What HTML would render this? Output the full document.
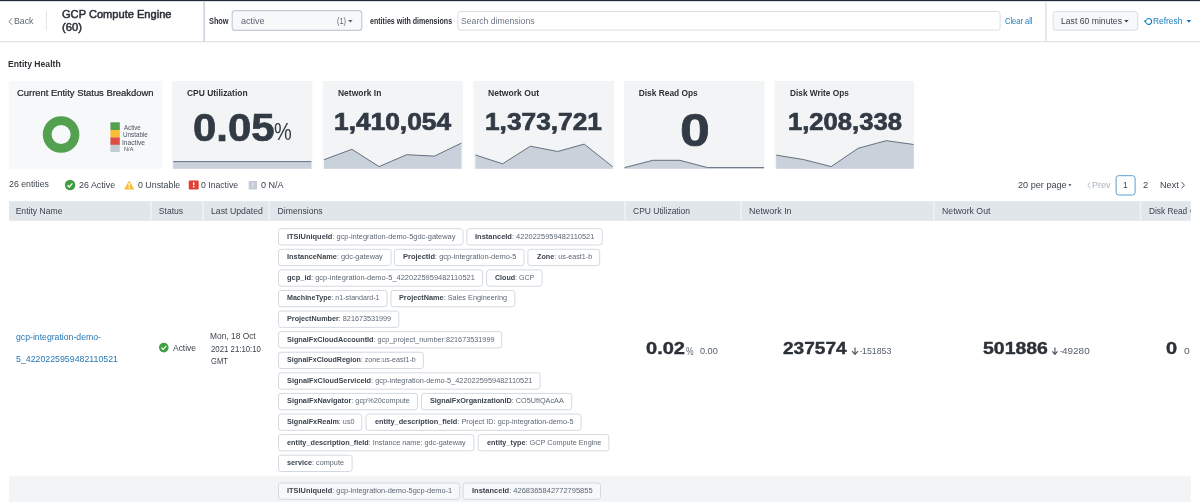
<!DOCTYPE html>
<html><head><meta charset="utf-8"><title>GCP Compute Engine</title>
<style>
*{box-sizing:border-box;margin:0;padding:0}
html,body{width:1200px;height:502px;overflow:hidden;background:#fff}
body{font-family:"Liberation Sans",sans-serif;color:#3c444d;position:relative}
#w{position:absolute;left:0;top:0;width:1200px;height:502px;filter:blur(0.45px)}
#shapes{position:absolute;left:0;top:0;overflow:visible}
.t{position:absolute;white-space:pre;line-height:1;transform-origin:0 0}
.t b{color:#3c444d}
</style></head><body>
<div id="w">
<svg id="shapes" width="1200" height="502" viewBox="0 0 1200 502">
<rect x="-6.00" y="-6.00" width="1212.00" height="7.15" fill="#222c37"/>
<rect x="-6.00" y="41.00" width="1212.00" height="1.40" fill="#e3e7eb"/>
<rect x="203.40" y="1.00" width="1.50" height="40.60" fill="#c8d0da"/>
<rect x="1045.20" y="1.00" width="1.40" height="40.60" fill="#dde2e8"/>
<rect x="45.90" y="11.00" width="1.00" height="19.60" fill="#dfe3e8"/>
<rect x="232.20" y="10.70" width="129.60" height="19.70" fill="#f7f8fa" stroke="#c3ccd6" stroke-width="1.2" rx="3"/>
<rect x="457.90" y="11.50" width="542.20" height="18.60" fill="#fff" stroke="#d9dee4" stroke-width="1" rx="2.5"/>
<rect x="1053.10" y="11.70" width="84.60" height="18.50" fill="#f7f8fa" stroke="#d9dee4" stroke-width="1" rx="2.5"/>
<path d="M11.9 18.3L9.1 21.5L11.9 24.7" fill="none" stroke="#5c6773" stroke-width="0.9"/>
<path d="M348 20L352.6 20L350.3 22.6Z" fill="#5c6773"/>
<path d="M1124.2 20L1128.6 20L1126.4 22.6Z" fill="#3c444d"/>
<path d="M1186.6 20L1191.2 20L1188.9 22.8Z" fill="#1a6fb0"/>
<path d="M1146.4 19.7A2.9 2.9 0 1 1 1146 22.4" fill="none" stroke="#1a7bbd" stroke-width="1.1"/>
<path d="M1143.6 20.5L1146.9 20.3L1145.4 22.9Z" fill="#1a7bbd"/>
<rect x="8.70" y="81.00" width="153.80" height="87.70" fill="#f7f8fa"/>
<rect x="172.00" y="81.00" width="140.40" height="87.70" fill="#f2f4f5"/>
<rect x="322.60" y="81.00" width="140.20" height="87.70" fill="#f2f4f5"/>
<rect x="473.40" y="81.00" width="140.60" height="87.70" fill="#f2f4f5"/>
<rect x="624.00" y="81.00" width="140.40" height="87.70" fill="#f2f4f5"/>
<rect x="774.60" y="81.00" width="139.60" height="87.70" fill="#f2f4f5"/>
<circle cx="61.1" cy="134.5" r="13.9" fill="none" stroke="#53a051" stroke-width="8.8"/>
<rect x="110.40" y="122.30" width="9.40" height="7.70" fill="#53a051"/>
<rect x="110.40" y="130.00" width="9.40" height="7.40" fill="#f8be34"/>
<rect x="110.40" y="137.40" width="9.40" height="7.50" fill="#dc4e41"/>
<rect x="110.40" y="144.90" width="9.40" height="7.10" fill="#c3cbd4"/>
<path d="M173.2 161.6L311.4 161.6L311.4 168.7L173.2 168.7Z" fill="#c9d1db"/>
<path d="M173.2 161.6L311.4 161.6" fill="none" stroke="#66717f" stroke-width="1"/>
<path d="M324.0 159.7L351.9 149.3L379.1 166.6L406.6 154.7L434.5 156.1L461.4 143.1L461.4 168.7L324.0 168.7Z" fill="#c9d1db"/>
<path d="M324.0 159.7L351.9 149.3L379.1 166.6L406.6 154.7L434.5 156.1L461.4 143.1" fill="none" stroke="#66717f" stroke-width="1"/>
<path d="M475.5 155.0L502.6 163.8L530.3 146.2L557.6 151.5L584.2 144.1L612.5 166.6L612.5 168.7L475.5 168.7Z" fill="#c9d1db"/>
<path d="M475.5 155.0L502.6 163.8L530.3 146.2L557.6 151.5L584.2 144.1L612.5 166.6" fill="none" stroke="#66717f" stroke-width="1"/>
<path d="M624.6 167.6L652.8 160.3L679.7 160.3L707.6 167.6L764.0 167.6L764.0 168.7L624.6 168.7Z" fill="#c9d1db"/>
<path d="M624.6 167.6L652.8 160.3L679.7 160.3L707.6 167.6L764.0 167.6" fill="none" stroke="#66717f" stroke-width="1"/>
<path d="M776.2 155.1L803.7 159.6L831.2 166.6L858.1 148.3L886.2 140.7L913.7 144.5L913.7 168.7L776.2 168.7Z" fill="#c9d1db"/>
<path d="M776.2 155.1L803.7 159.6L831.2 166.6L858.1 148.3L886.2 140.7L913.7 144.5" fill="none" stroke="#66717f" stroke-width="1"/>
<circle cx="70.1" cy="185" r="5.25" fill="#3f9e40"/>
<path d="M67.5 185.3L69.3 187L72.4 183.3" fill="none" stroke="#fff" stroke-width="1.3"/>
<path d="M129.2 180.4L134.4 189.4H124Z" fill="#f8be34"/>
<path d="M129.2 183V186.3M129.2 187.1V188.3" fill="none" stroke="#fff" stroke-width="1.3"/>
<rect x="188.70" y="180.50" width="10.00" height="9.00" fill="#de4236" rx="1.2"/>
<path d="M193.7 182.3V185.3M193.7 186.1V187.5" fill="none" stroke="#fff" stroke-width="1.4"/>
<rect x="248.70" y="181.00" width="8.40" height="8.50" fill="#c3cbd4" rx="1"/>
<path d="M252.9 182.6V185.4M252.9 186.2V187.5" fill="none" stroke="#e8ecf0" stroke-width="1.3"/>
<path d="M1068.3 184.2L1071.5 184.2L1069.9 186.2Z" fill="#3c444d"/>
<path d="M1090 182L1088 185.2L1090 188.4" fill="none" stroke="#aab3bd" stroke-width="0.8"/>
<path d="M1181.6 182L1184.4 185.2L1181.6 188.4" fill="none" stroke="#3c444d" stroke-width="0.9"/>
<rect x="1116.10" y="175.70" width="19.00" height="19.30" fill="#fff" stroke="#5a9fd4" stroke-width="1" rx="2.5"/>
<rect x="9.00" y="201.20" width="1181.80" height="19.60" fill="#e1e6eb"/>
<rect x="150.10" y="201.20" width="1.60" height="19.60" fill="#f0f3f6"/>
<rect x="202.30" y="201.20" width="1.60" height="19.60" fill="#f0f3f6"/>
<rect x="268.50" y="201.20" width="1.60" height="19.60" fill="#f0f3f6"/>
<rect x="624.20" y="201.20" width="1.60" height="19.60" fill="#f0f3f6"/>
<rect x="740.20" y="201.20" width="1.60" height="19.60" fill="#f0f3f6"/>
<rect x="933.20" y="201.20" width="1.60" height="19.60" fill="#f0f3f6"/>
<rect x="1139.80" y="201.20" width="1.60" height="19.60" fill="#f0f3f6"/>
<rect x="9.00" y="476.20" width="1181.80" height="33.80" fill="#f2f4f5"/>
<circle cx="163.8" cy="347.6" r="4.8" fill="#3f9e40"/>
<path d="M161.4 347.7L163.1 349.4L166.3 345.9" fill="none" stroke="#fff" stroke-width="1.2"/>
<path d="M855 347.4V354M852 351.2L855 354.3L858 351.2" fill="none" stroke="#4a5360" stroke-width="1.15"/>
<path d="M1054.9 347.4V354M1052.3 351.3L1054.9 354.3L1057.5 351.3" fill="none" stroke="#4a5360" stroke-width="1.15"/>
<rect x="278.50" y="228.70" width="184.50" height="16.30" fill="#fff" stroke="#d3d9e1" stroke-width="1" rx="2.5"/>
<rect x="466.90" y="228.70" width="135.30" height="16.30" fill="#fff" stroke="#d3d9e1" stroke-width="1" rx="2.5"/>
<rect x="278.50" y="249.29" width="112.60" height="16.30" fill="#fff" stroke="#d3d9e1" stroke-width="1" rx="2.5"/>
<rect x="394.40" y="249.29" width="129.60" height="16.30" fill="#fff" stroke="#d3d9e1" stroke-width="1" rx="2.5"/>
<rect x="527.90" y="249.29" width="71.80" height="16.30" fill="#fff" stroke="#d3d9e1" stroke-width="1" rx="2.5"/>
<rect x="278.50" y="269.88" width="204.10" height="16.30" fill="#fff" stroke="#d3d9e1" stroke-width="1" rx="2.5"/>
<rect x="486.60" y="269.88" width="55.50" height="16.30" fill="#fff" stroke="#d3d9e1" stroke-width="1" rx="2.5"/>
<rect x="278.50" y="290.47" width="108.60" height="16.30" fill="#fff" stroke="#d3d9e1" stroke-width="1" rx="2.5"/>
<rect x="391.00" y="290.47" width="123.90" height="16.30" fill="#fff" stroke="#d3d9e1" stroke-width="1" rx="2.5"/>
<rect x="278.50" y="311.06" width="120.30" height="16.30" fill="#fff" stroke="#d3d9e1" stroke-width="1" rx="2.5"/>
<rect x="278.50" y="331.65" width="223.20" height="16.30" fill="#fff" stroke="#d3d9e1" stroke-width="1" rx="2.5"/>
<rect x="278.50" y="352.24" width="144.90" height="16.30" fill="#fff" stroke="#d3d9e1" stroke-width="1" rx="2.5"/>
<rect x="278.50" y="372.83" width="261.60" height="16.30" fill="#fff" stroke="#d3d9e1" stroke-width="1" rx="2.5"/>
<rect x="278.50" y="393.42" width="139.00" height="16.30" fill="#fff" stroke="#d3d9e1" stroke-width="1" rx="2.5"/>
<rect x="421.50" y="393.42" width="150.30" height="16.30" fill="#fff" stroke="#d3d9e1" stroke-width="1" rx="2.5"/>
<rect x="278.50" y="414.01" width="83.30" height="16.30" fill="#fff" stroke="#d3d9e1" stroke-width="1" rx="2.5"/>
<rect x="366.00" y="414.01" width="215.10" height="16.30" fill="#fff" stroke="#d3d9e1" stroke-width="1" rx="2.5"/>
<rect x="278.50" y="434.60" width="195.50" height="16.30" fill="#fff" stroke="#d3d9e1" stroke-width="1" rx="2.5"/>
<rect x="478.20" y="434.60" width="130.70" height="16.30" fill="#fff" stroke="#d3d9e1" stroke-width="1" rx="2.5"/>
<rect x="278.50" y="455.19" width="73.60" height="16.30" fill="#fff" stroke="#d3d9e1" stroke-width="1" rx="2.5"/>
<rect x="278.50" y="483.00" width="181.00" height="16.30" fill="#f7f8fa" stroke="#d3d9e1" stroke-width="1" rx="2.5"/>
<rect x="463.10" y="483.00" width="137.40" height="16.30" fill="#f7f8fa" stroke="#d3d9e1" stroke-width="1" rx="2.5"/>
</svg>
<div class="t" style="left:13.87px;top:16.68px;font-size:9.00px;color:#5c6773;transform:scaleX(0.9746);">Back</div>
<div class="t" style="left:61.58px;top:8.86px;font-size:10.80px;color:#2c3138;transform:scaleX(1.0269);-webkit-text-stroke:0.5px #2c3138;">GCP Compute Engine</div>
<div class="t" style="left:61.52px;top:21.66px;font-size:10.80px;color:#2c3138;transform:scaleX(1.0358);-webkit-text-stroke:0.5px #2c3138;">(60)</div>
<div class="t" style="left:208.94px;top:17.09px;font-size:8.40px;color:#2c3138;font-weight:bold;transform:scaleX(0.8753);">Show</div>
<div class="t" style="left:240.81px;top:17.33px;font-size:9.30px;color:#5c6773;transform:scaleX(0.9736);">active</div>
<div class="t" style="left:336.88px;top:17.09px;font-size:8.40px;color:#5c6773;transform:scaleX(0.8817);">(1)</div>
<div class="t" style="left:370.15px;top:18.26px;font-size:8.20px;color:#2c3138;font-weight:bold;transform:scaleX(0.8631);">entities with dimensions</div>
<div class="t" style="left:461.22px;top:15.76px;font-size:9.50px;color:#6b7785;transform:scaleX(0.9103);">Search dimensions</div>
<div class="t" style="left:1004.64px;top:17.09px;font-size:8.40px;color:#1a7bbd;transform:scaleX(0.8940);">Clear all</div>
<div class="t" style="left:1061.16px;top:17.41px;font-size:9.20px;color:#3c444d;transform:scaleX(0.9397);">Last 60 minutes</div>
<div class="t" style="left:1153.24px;top:17.41px;font-size:9.20px;color:#1a7bbd;transform:scaleX(0.9127);">Refresh</div>
<div class="t" style="left:8.39px;top:60.09px;font-size:8.40px;color:#2c3138;font-weight:bold;transform:scaleX(1.0286);">Entity Health</div>
<div class="t" style="left:17.31px;top:89.10px;font-size:8.50px;color:#23282e;transform:scaleX(1.1071);-webkit-text-stroke:0.2px #23282e;">Current Entity Status Breakdown</div>
<div class="t" style="left:123.54px;top:125.21px;font-size:6.60px;color:#4a535e;transform:scaleX(0.9295);">Active</div>
<div class="t" style="left:123.35px;top:132.11px;font-size:6.60px;color:#4a535e;transform:scaleX(0.9549);">Unstable</div>
<div class="t" style="left:122.46px;top:140.01px;font-size:6.60px;color:#4a535e;transform:scaleX(1.0084);">Inactive</div>
<div class="t" style="left:123.54px;top:147.17px;font-size:5.00px;color:#4a535e;transform:scaleX(1.1311);">N/A</div>
<div class="t" style="left:187.27px;top:88.79px;font-size:8.40px;color:#2c3138;font-weight:bold;transform:scaleX(1.0090);">CPU Utilization</div>
<div class="t" style="left:338.04px;top:88.79px;font-size:8.40px;color:#2c3138;font-weight:bold;transform:scaleX(1.0122);">Network In</div>
<div class="t" style="left:488.39px;top:88.79px;font-size:8.40px;color:#2c3138;font-weight:bold;transform:scaleX(1.0248);">Network Out</div>
<div class="t" style="left:638.66px;top:88.79px;font-size:8.40px;color:#2c3138;font-weight:bold;">Disk Read Ops</div>
<div class="t" style="left:789.54px;top:88.79px;font-size:8.40px;color:#2c3138;font-weight:bold;transform:scaleX(0.9908);">Disk Write Ops</div>
<div class="t" style="left:192.97px;top:107.90px;font-size:39.10px;color:#323a45;font-weight:bold;transform:scaleX(1.0724);-webkit-text-stroke:0.7px #323a45;">0.05</div>
<div class="t" style="left:274.02px;top:119.66px;font-size:24.50px;color:#323a45;transform:scaleX(0.8140);">%</div>
<div class="t" style="left:333.97px;top:111.28px;font-size:23.30px;color:#323a45;font-weight:bold;transform:scaleX(1.1294);-webkit-text-stroke:0.7px #323a45;">1,410,054</div>
<div class="t" style="left:484.97px;top:111.28px;font-size:23.30px;color:#323a45;font-weight:bold;transform:scaleX(1.1278);-webkit-text-stroke:0.7px #323a45;">1,373,721</div>
<div class="t" style="left:680.10px;top:106.54px;font-size:46.50px;color:#323a45;font-weight:bold;transform:scaleX(1.1545);-webkit-text-stroke:0.7px #323a45;">0</div>
<div class="t" style="left:788.26px;top:111.28px;font-size:23.30px;color:#323a45;font-weight:bold;transform:scaleX(1.0996);-webkit-text-stroke:0.7px #323a45;">1,208,338</div>
<div class="t" style="left:9.41px;top:179.72px;font-size:8.60px;color:#3c444d;transform:scaleX(1.0200);">26 entities</div>
<div class="t" style="left:78.72px;top:180.95px;font-size:8.80px;color:#3c444d;transform:scaleX(1.0116);">26 Active</div>
<div class="t" style="left:137.54px;top:180.95px;font-size:8.80px;color:#3c444d;transform:scaleX(1.0049);">0 Unstable</div>
<div class="t" style="left:201.00px;top:180.95px;font-size:8.80px;color:#3c444d;transform:scaleX(0.9846);">0 Inactive</div>
<div class="t" style="left:260.86px;top:180.95px;font-size:8.80px;color:#3c444d;transform:scaleX(1.0293);">0 N/A</div>
<div class="t" style="left:1017.76px;top:180.55px;font-size:8.80px;color:#3c444d;transform:scaleX(1.0366);">20 per page</div>
<div class="t" style="left:1091.77px;top:180.55px;font-size:8.80px;color:#aab3bd;transform:scaleX(1.0246);">Prev</div>
<div class="t" style="left:1122.95px;top:180.55px;font-size:8.80px;color:#3c444d;transform:scaleX(0.9584);">1</div>
<div class="t" style="left:1143.06px;top:180.55px;font-size:8.80px;color:#3c444d;transform:scaleX(1.0540);">2</div>
<div class="t" style="left:1160.37px;top:180.55px;font-size:8.80px;color:#3c444d;transform:scaleX(1.0382);">Next</div>
<div class="t" style="left:15.63px;top:207.02px;font-size:8.60px;color:#3c444d;">Entity Name</div>
<div class="t" style="left:158.81px;top:207.02px;font-size:8.60px;color:#3c444d;">Status</div>
<div class="t" style="left:210.88px;top:207.02px;font-size:8.60px;color:#3c444d;transform:scaleX(1.0164);">Last Updated</div>
<div class="t" style="left:277.62px;top:207.02px;font-size:8.60px;color:#3c444d;">Dimensions</div>
<div class="t" style="left:633.06px;top:207.02px;font-size:8.60px;color:#3c444d;transform:scaleX(0.9873);">CPU Utilization</div>
<div class="t" style="left:748.63px;top:207.02px;font-size:8.60px;color:#3c444d;transform:scaleX(1.0367);">Network In</div>
<div class="t" style="left:941.59px;top:207.02px;font-size:8.60px;color:#3c444d;transform:scaleX(1.0133);">Network Out</div>
<div class="t" style="left:1148.98px;top:207.02px;font-size:8.60px;color:#3c444d;transform:scaleX(0.9639);">Disk Read</div>
<div class="t" style="left:1190.10px;top:207.02px;font-size:8.60px;color:#3c444d;transform:scaleX(1.0096);">O</div>
<div class="t" style="left:16.47px;top:332.52px;font-size:8.60px;color:#2678b5;transform:scaleX(1.0100);">gcp-integration-demo-</div>
<div class="t" style="left:15.91px;top:354.52px;font-size:8.60px;color:#2678b5;transform:scaleX(1.0224);">5_4220225959482110521</div>
<div class="t" style="left:172.79px;top:343.85px;font-size:8.80px;color:#3c444d;transform:scaleX(0.9607);">Active</div>
<div class="t" style="left:210.39px;top:332.32px;font-size:8.60px;color:#3c444d;transform:scaleX(0.9760);">Mon, 18 Oct</div>
<div class="t" style="left:211.12px;top:344.52px;font-size:8.60px;color:#3c444d;transform:scaleX(0.9084);">2021 21:10:10</div>
<div class="t" style="left:211.22px;top:356.52px;font-size:8.60px;color:#3c444d;transform:scaleX(0.8811);">GMT</div>
<div class="t" style="left:646.41px;top:339.92px;font-size:17.10px;color:#2c3138;font-weight:bold;transform:scaleX(1.1716);-webkit-text-stroke:0.4px #2c3138;">0.02</div>
<div class="t" style="left:685.81px;top:346.39px;font-size:11.00px;color:#5c6773;transform:scaleX(0.7720);">%</div>
<div class="t" style="left:699.50px;top:346.78px;font-size:9.00px;color:#525c68;transform:scaleX(1.0155);">0.00</div>
<div class="t" style="left:782.95px;top:339.92px;font-size:17.10px;color:#2c3138;font-weight:bold;transform:scaleX(1.1152);-webkit-text-stroke:0.4px #2c3138;">237574</div>
<div class="t" style="left:859.50px;top:346.78px;font-size:9.00px;color:#5c6773;transform:scaleX(0.8706);">-</div>
<div class="t" style="left:862.19px;top:346.78px;font-size:9.00px;color:#525c68;transform:scaleX(0.9750);">151853</div>
<div class="t" style="left:982.87px;top:339.92px;font-size:17.10px;color:#2c3138;font-weight:bold;transform:scaleX(1.1376);-webkit-text-stroke:0.4px #2c3138;">501886</div>
<div class="t" style="left:1060.16px;top:346.78px;font-size:9.00px;color:#5c6773;transform:scaleX(0.8351);">-</div>
<div class="t" style="left:1062.22px;top:346.78px;font-size:9.00px;color:#525c68;transform:scaleX(1.1060);">49280</div>
<div class="t" style="left:1166.28px;top:339.92px;font-size:17.10px;color:#2c3138;font-weight:bold;transform:scaleX(1.1711);-webkit-text-stroke:0.4px #2c3138;">0</div>
<div class="t" style="left:1183.55px;top:346.78px;font-size:9.00px;color:#525c68;transform:scaleX(1.1408);">0</div>
<div class="t" style="left:286.73px;top:232.77px;font-size:7.00px;color:#5c6773;transform:scaleX(1.0611);"><b>ITSIUniqueId</b>: gcp-integration-demo-5gdc-gateway</div>
<div class="t" style="left:475.32px;top:232.77px;font-size:7.00px;color:#5c6773;transform:scaleX(1.0664);"><b>InstanceId</b>: 4220225959482110521</div>
<div class="t" style="left:286.77px;top:253.36px;font-size:7.00px;color:#5c6773;transform:scaleX(1.0518);"><b>InstanceName</b>: gdc-gateway</div>
<div class="t" style="left:403.02px;top:253.36px;font-size:7.00px;color:#5c6773;transform:scaleX(1.0682);"><b>ProjectId</b>: gcp-integration-demo-5</div>
<div class="t" style="left:536.82px;top:253.36px;font-size:7.00px;color:#5c6773;transform:scaleX(1.0268);"><b>Zone</b>: us-east1-b</div>
<div class="t" style="left:287.27px;top:273.95px;font-size:7.00px;color:#5c6773;transform:scaleX(1.0663);"><b>gcp_id</b>: gcp-integration-demo-5_4220225959482110521</div>
<div class="t" style="left:495.01px;top:273.95px;font-size:7.00px;color:#5c6773;transform:scaleX(1.0115);"><b>Cloud</b>: GCP</div>
<div class="t" style="left:286.89px;top:293.54px;font-size:7.00px;color:#5c6773;transform:scaleX(1.0134);"><b>MachineType</b>: n1-standard-1</div>
<div class="t" style="left:399.22px;top:293.54px;font-size:7.00px;color:#5c6773;transform:scaleX(1.0436);"><b>ProjectName</b>: Sales Engineering</div>
<div class="t" style="left:286.86px;top:315.13px;font-size:7.00px;color:#5c6773;transform:scaleX(1.0328);"><b>ProjectNumber</b>: 821673531999</div>
<div class="t" style="left:286.71px;top:335.72px;font-size:7.00px;color:#5c6773;transform:scaleX(1.0396);"><b>SignalFxCloudAccountId</b>: gcp_project_number:821673531999</div>
<div class="t" style="left:286.76px;top:356.31px;font-size:7.00px;color:#5c6773;transform:scaleX(1.0156);"><b>SignalFxCloudRegion</b>: zone:us-east1-b</div>
<div class="t" style="left:286.70px;top:376.90px;font-size:7.00px;color:#5c6773;transform:scaleX(1.0497);"><b>SignalFxCloudServiceId</b>: gcp-integration-demo-5_4220225959482110521</div>
<div class="t" style="left:286.70px;top:397.49px;font-size:7.00px;color:#5c6773;transform:scaleX(1.0459);"><b>SignalFxNavigator</b>: gcp%20compute</div>
<div class="t" style="left:429.69px;top:397.49px;font-size:7.00px;color:#5c6773;transform:scaleX(1.0357);"><b>SignalFxOrganizationID</b>: CO5UfIQAcAA</div>
<div class="t" style="left:286.73px;top:418.08px;font-size:7.00px;color:#5c6773;transform:scaleX(1.0331);"><b>SignalFxRealm</b>: us0</div>
<div class="t" style="left:374.53px;top:418.08px;font-size:7.00px;color:#5c6773;transform:scaleX(1.0478);"><b>entity_description_field</b>: Project ID: gcp-integration-demo-5</div>
<div class="t" style="left:287.15px;top:438.67px;font-size:7.00px;color:#5c6773;transform:scaleX(1.0393);"><b>entity_description_field</b>: Instance name: gdc-gateway</div>
<div class="t" style="left:486.68px;top:438.67px;font-size:7.00px;color:#5c6773;transform:scaleX(1.0402);"><b>entity_type</b>: GCP Compute Engine</div>
<div class="t" style="left:286.98px;top:459.26px;font-size:7.00px;color:#5c6773;transform:scaleX(1.0375);"><b>service</b>: compute</div>
<div class="t" style="left:286.67px;top:487.07px;font-size:7.00px;color:#5c6773;transform:scaleX(1.0560);"><b>ITSIUniqueId</b>: gcp-integration-demo-5gcp-demo-1</div>
<div class="t" style="left:471.90px;top:487.07px;font-size:7.00px;color:#5c6773;transform:scaleX(1.0725);"><b>InstanceId</b>: 4268365842772795855</div>
<div id="clipr" style="position:absolute;left:1190.8px;top:200px;width:9.2px;height:22px;background:#fff"></div>
</div>
</body></html>
